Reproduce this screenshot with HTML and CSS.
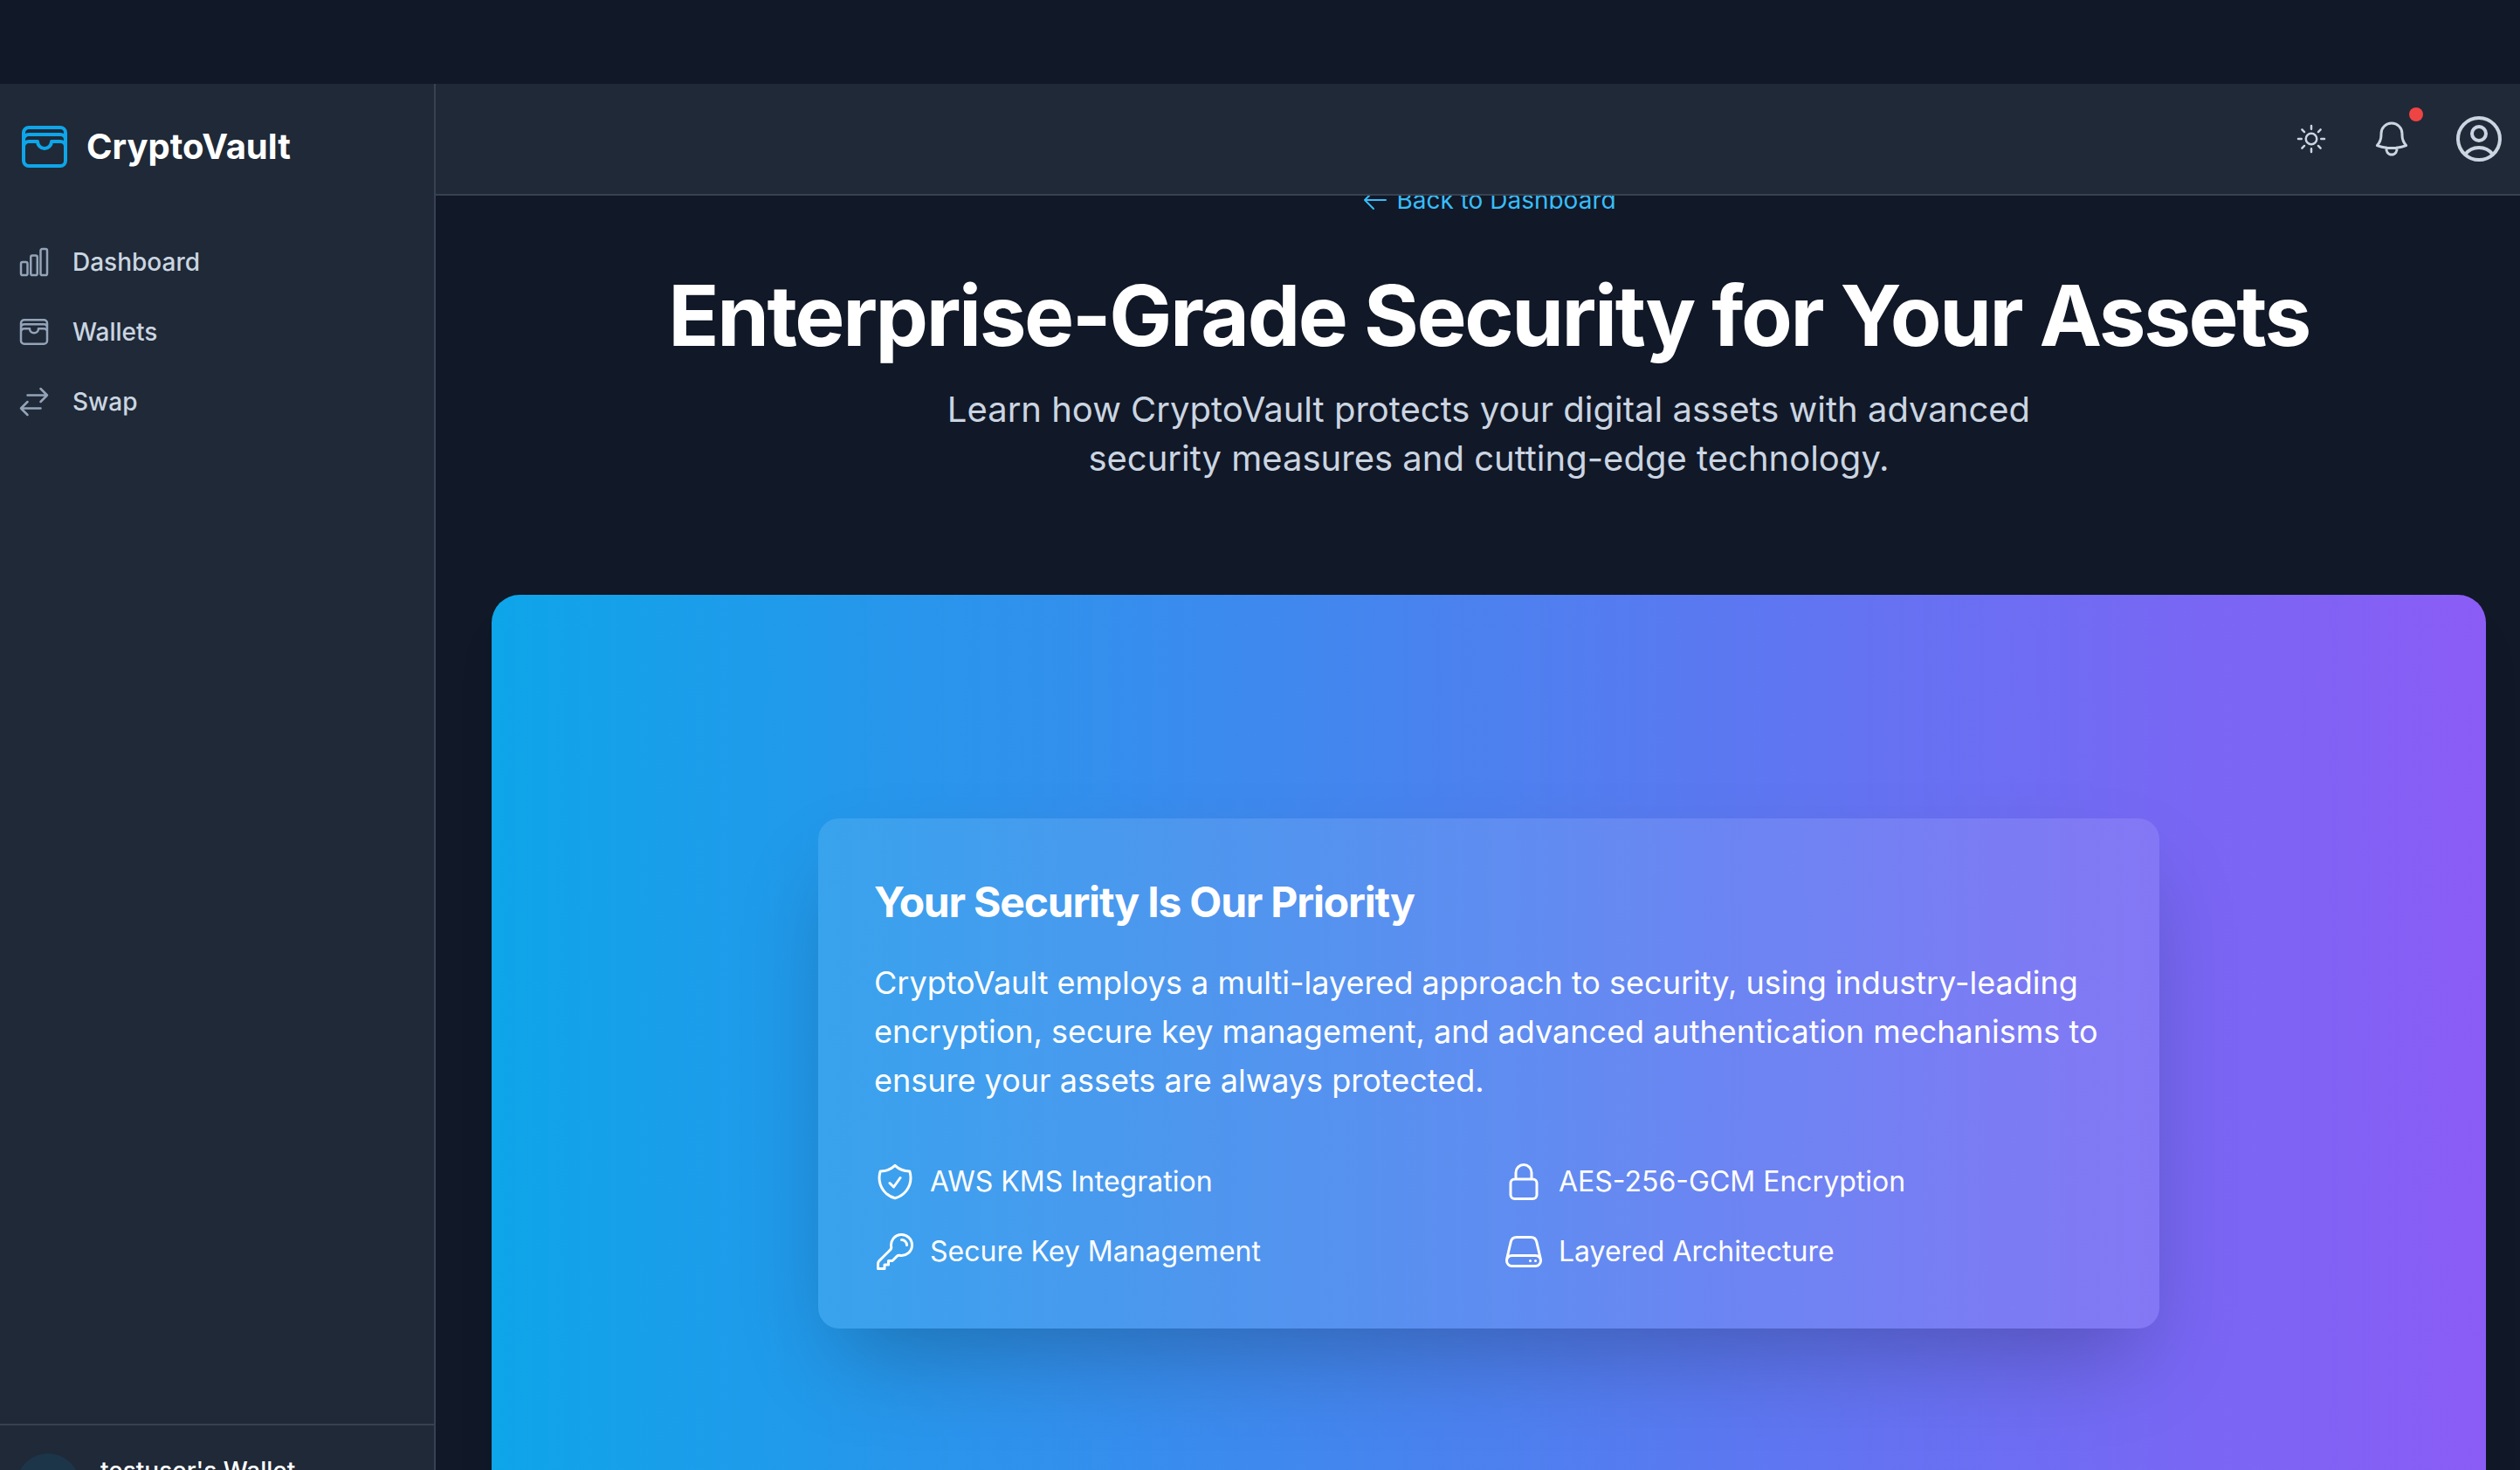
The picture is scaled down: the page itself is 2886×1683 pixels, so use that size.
FILE: index.html
```html
<!DOCTYPE html>
<html lang="en">
<head>
<meta charset="utf-8">
<meta name="viewport" content="width=device-width, initial-scale=1">
<title>CryptoVault – Security</title>
<link rel="stylesheet" href="styles.css">
</head>
<body>
<div class="shell">
  <aside class="sidebar">
    <a class="brand" href="#">
      <svg class="icon icon-xl" viewBox="0 0 24 24" aria-hidden="true"><path d="M21 12a2.25 2.25 0 0 0-2.25-2.25H15a3 3 0 1 1-6 0H5.25A2.25 2.25 0 0 0 3 12m18 0v6a2.25 2.25 0 0 1-2.25 2.25H5.25A2.25 2.25 0 0 1 3 18v-6m18 0V9M3 12V9m18 0a2.25 2.25 0 0 0-2.25-2.25H5.25A2.25 2.25 0 0 0 3 9m18 0V6a2.25 2.25 0 0 0-2.25-2.25H5.25A2.25 2.25 0 0 0 3 6v3"/></svg>
      <span class="brand-name">CryptoVault</span>
    </a>
    <nav class="nav" aria-label="Main">
      <a class="nav-link" href="#">
        <svg class="icon icon-sm" viewBox="0 0 24 24" aria-hidden="true"><path d="M3 13.125C3 12.504 3.504 12 4.125 12h2.25c.621 0 1.125.504 1.125 1.125v6.75C7.5 20.496 6.996 21 6.375 21h-2.25A1.125 1.125 0 0 1 3 19.875v-6.75ZM9.75 8.625c0-.621.504-1.125 1.125-1.125h2.25c.621 0 1.125.504 1.125 1.125v11.25c0 .621-.504 1.125-1.125 1.125h-2.25a1.125 1.125 0 0 1-1.125-1.125V8.625ZM16.5 4.125c0-.621.504-1.125 1.125-1.125h2.25C20.496 3 21 3.504 21 4.125v15.75c0 .621-.504 1.125-1.125 1.125h-2.25a1.125 1.125 0 0 1-1.125-1.125V4.125Z"/></svg>
        Dashboard
      </a>
      <a class="nav-link" href="#">
        <svg class="icon icon-sm" viewBox="0 0 24 24" aria-hidden="true"><path d="M21 12a2.25 2.25 0 0 0-2.25-2.25H15a3 3 0 1 1-6 0H5.25A2.25 2.25 0 0 0 3 12m18 0v6a2.25 2.25 0 0 1-2.25 2.25H5.25A2.25 2.25 0 0 1 3 18v-6m18 0V9M3 12V9m18 0a2.25 2.25 0 0 0-2.25-2.25H5.25A2.25 2.25 0 0 0 3 9m18 0V6a2.25 2.25 0 0 0-2.25-2.25H5.25A2.25 2.25 0 0 0 3 6v3"/></svg>
        Wallets
      </a>
      <a class="nav-link" href="#">
        <svg class="icon icon-sm" viewBox="0 0 24 24" aria-hidden="true"><path d="M7.5 21 3 16.5m0 0L7.5 12M3 16.5h13.5m0-13.5L21 7.5m0 0L16.5 12M21 7.5H7.5"/></svg>
        Swap
      </a>
    </nav>
    <div class="account">
      <span class="avatar"></span>
      <span class="account-name">testuser's Wallet</span>
    </div>
  </aside>

  <div class="page">
    <header class="topbar">
      <button class="icon-button" type="button" aria-label="Toggle theme">
        <svg class="icon icon-sm" viewBox="0 0 24 24" aria-hidden="true"><path d="M12 3v2.25m6.364.386-1.591 1.591M21 12h-2.25m-.386 6.364-1.591-1.591M12 18.75V21m-4.773-4.227-1.591 1.591M5.25 12H3m4.227-4.773L5.636 5.636M15.75 12a3.75 3.75 0 1 1-7.5 0 3.75 3.75 0 0 1 7.5 0Z"/></svg>
      </button>
      <button class="icon-button bell" type="button" aria-label="Notifications">
        <svg class="icon icon-md" viewBox="0 0 24 24" aria-hidden="true"><path d="M14.857 17.082a23.848 23.848 0 0 0 5.454-1.31A8.967 8.967 0 0 1 18 9.75V9A6 6 0 0 0 6 9v.75a8.967 8.967 0 0 1-2.312 6.022c1.733.64 3.56 1.085 5.455 1.31m5.714 0a24.255 24.255 0 0 1-5.714 0m5.714 0a3 3 0 1 1-5.714 0"/></svg>
        <span class="badge"></span>
      </button>
      <button class="icon-button profile" type="button" aria-label="Account">
        <svg class="icon icon-xl" viewBox="0 0 24 24" aria-hidden="true"><path d="M17.982 18.725A7.488 7.488 0 0 0 12 15.75a7.488 7.488 0 0 0-5.982 2.975m11.963 0a9 9 0 1 0-11.963 0m11.963 0A8.966 8.966 0 0 1 12 21a8.966 8.966 0 0 1-5.982-2.275M15 9.75a3 3 0 1 1-6 0 3 3 0 0 1 6 0Z"/></svg>
      </button>
    </header>

    <main class="content">
      <a class="back-link" href="#">
        <svg class="icon icon-xs" viewBox="0 0 24 24" aria-hidden="true"><path d="M10.5 19.5 3 12m0 0 7.5-7.5M3 12h18"/></svg>
        Back to Dashboard
      </a>
      <h1 class="title">Enterprise-Grade Security for Your Assets</h1>
      <p class="subtitle">Learn how CryptoVault protects your digital assets with advanced security measures and cutting-edge technology.</p>

      <section class="hero">
        <div class="panel">
          <h2 class="panel-title">Your Security Is Our Priority</h2>
          <p class="panel-text">CryptoVault employs a multi-layered approach to security, using industry-leading encryption, secure key management, and advanced authentication mechanisms to ensure your assets are always protected.</p>
          <ul class="features">
            <li class="feature">
              <svg class="icon icon-md" viewBox="0 0 24 24" aria-hidden="true"><path d="M9 12.75 11.25 15 15 9.75m-3-7.036A11.959 11.959 0 0 1 3.598 6 11.99 11.99 0 0 0 3 9.749c0 5.592 3.824 10.29 9 11.623 5.176-1.332 9-6.03 9-11.622 0-1.31-.21-2.571-.598-3.751h-.152c-3.196 0-6.1-1.248-8.25-3.285Z"/></svg>
              AWS KMS Integration
            </li>
            <li class="feature">
              <svg class="icon icon-md" viewBox="0 0 24 24" aria-hidden="true"><path d="M16.5 10.5V6.75a4.5 4.5 0 1 0-9 0v3.75m-.75 11.25h10.5a2.25 2.25 0 0 0 2.25-2.25v-6.75a2.25 2.25 0 0 0-2.25-2.25H6.75a2.25 2.25 0 0 0-2.25 2.25v6.75a2.25 2.25 0 0 0 2.25 2.25Z"/></svg>
              AES-256-GCM Encryption
            </li>
            <li class="feature">
              <svg class="icon icon-md" viewBox="0 0 24 24" aria-hidden="true"><path d="M15.75 5.25a3 3 0 0 1 3 3m3 0a6 6 0 0 1-7.029 5.912c-.563-.097-1.159.026-1.563.43L10.5 17.25H8.25v2.25H6v2.25H2.25v-2.818c0-.597.237-1.17.659-1.591l6.499-6.499c.404-.404.527-1 .43-1.563A6 6 0 1 1 21.75 8.25Z"/></svg>
              Secure Key Management
            </li>
            <li class="feature">
              <svg class="icon icon-md" viewBox="0 0 24 24" aria-hidden="true"><path d="M21.75 17.25v-.228a4.5 4.5 0 0 0-.12-1.03l-2.268-9.64a3.375 3.375 0 0 0-3.285-2.602H7.923a3.375 3.375 0 0 0-3.285 2.602l-2.268 9.64a4.5 4.5 0 0 0-.12 1.03v.228m19.5 0a3 3 0 0 1-3 3H5.25a3 3 0 0 1-3-3m19.5 0a3 3 0 0 0-3-3H5.25a3 3 0 0 0-3 3m16.5 0h.008v.008h-.008v-.008Zm-3 0h.008v.008h-.008v-.008Z"/></svg>
              Layered Architecture
            </li>
          </ul>
        </div>
      </section>
    </main>
  </div>
</div>
</body>
</html>
```
FILE: styles.css
```css
*, *::before, *::after { box-sizing: border-box; }

body {
  margin: 0;
  height: 100vh;
  overflow: hidden;
  background: #111827;
  color: #fff;
  font-family: Inter, "Liberation Sans", sans-serif;
  font-size: 28px;
  line-height: 40px;
}

h1, h2, p, ul { margin: 0; padding: 0; }
ul { list-style: none; }
a { color: inherit; text-decoration: none; }

.icon {
  flex: none;
  fill: none;
  stroke: currentColor;
  stroke-width: 1.5;
  stroke-linecap: round;
  stroke-linejoin: round;
}
.icon-xs { width: 32px; height: 32px; }
.icon-sm { width: 40px; height: 40px; }
.icon-md { width: 48px; height: 48px; }
.icon-xl { width: 64px; height: 64px; }

/* The shell runs a little past the fold, with a strip of space above it. */
.shell {
  display: flex;
  height: calc(100vh + 85px);
  padding-top: 96px;
}

/* Sidebar */
.sidebar {
  display: flex;
  flex: none;
  flex-direction: column;
  width: 499px;
  background: #1f2937;
  border-right: 2px solid #374151;
}
.brand {
  display: flex;
  align-items: center;
  gap: 16px;
  padding: 40px 19px 64px;
  color: #0ea5e9;
}
.brand-name {
  color: #fff;
  font-size: 40px;
  font-weight: 700;
  line-height: 56px;
}
.nav {
  display: flex;
  flex: 1;
  flex-direction: column;
  gap: 8px;
}
.nav-link {
  display: flex;
  align-items: center;
  gap: 24px;
  padding: 16px 19px;
  color: #cbd5e1;
  font-weight: 500;
}
.nav-link .icon { color: #94a3b8; }
.account {
  display: flex;
  gap: 24px;
  height: 138px;
  padding: 32px 19px;
  border-top: 2px solid #374151;
}
.avatar {
  width: 72px;
  height: 72px;
  border-radius: 50%;
  background: rgba(14, 165, 233, 0.1);
}
.account-name { font-weight: 500; }

/* Top bar */
.page {
  flex: 1;
  min-width: 0;
}
.topbar {
  position: relative;
  z-index: 1;
  display: flex;
  align-items: center;
  justify-content: flex-end;
  gap: 32px;
  height: 128px;
  padding-right: 15px;
  background: #1f2937;
  border-bottom: 2px solid #374151;
}
.icon-button {
  position: relative;
  display: flex;
  padding: 4px;
  border: 0;
  background: none;
  color: #cbd5e1;
}
.bell { padding: 12px; }
.profile { padding: 0; }
.badge {
  position: absolute;
  top: 0;
  right: 0;
  width: 16px;
  height: 16px;
  border-radius: 50%;
  background: #ef4444;
}

/* Content, scrolled slightly under the top bar */
.content {
  display: flex;
  flex-direction: column;
  align-items: center;
  margin-top: -15px;
  padding: 0 39px 64px 64px;
}
.back-link {
  display: flex;
  align-items: center;
  gap: 8px;
  color: #38bdf8;
}
.title {
  margin-top: 64px;
  font-size: 96px;
  font-weight: 700;
  letter-spacing: -0.025em;
  line-height: 96px;
  text-align: center;
}
.subtitle {
  max-width: 1344px;
  margin-top: 32px;
  color: #cbd5e1;
  font-size: 40px;
  line-height: 56px;
  text-align: center;
}
.hero {
  display: flex;
  justify-content: center;
  width: 100%;
  margin-top: 128px;
  padding: 256px 64px;
  border-radius: 32px;
  background: linear-gradient(to right, #0ea5e9, #8b5cf6);
  box-shadow: 0 40px 50px -10px rgba(0, 0, 0, 0.1), 0 16px 20px -12px rgba(0, 0, 0, 0.1);
}
.panel {
  width: 100%;
  max-width: 1536px;
  padding: 64px;
  border-radius: 24px;
  background: rgba(255, 255, 255, 0.1);
  box-shadow: 0 50px 100px -24px rgba(0, 0, 0, 0.25);
}
.panel-title {
  font-size: 48px;
  font-weight: 700;
  letter-spacing: -0.025em;
  line-height: 64px;
}
.panel-text {
  margin-top: 32px;
  font-size: 36px;
  line-height: 56px;
}
.features {
  display: grid;
  grid-template-columns: 1fr 1fr;
  gap: 32px;
  margin-top: 64px;
}
.feature {
  display: flex;
  align-items: center;
  gap: 16px;
  font-size: 32px;
  line-height: 48px;
}
```
